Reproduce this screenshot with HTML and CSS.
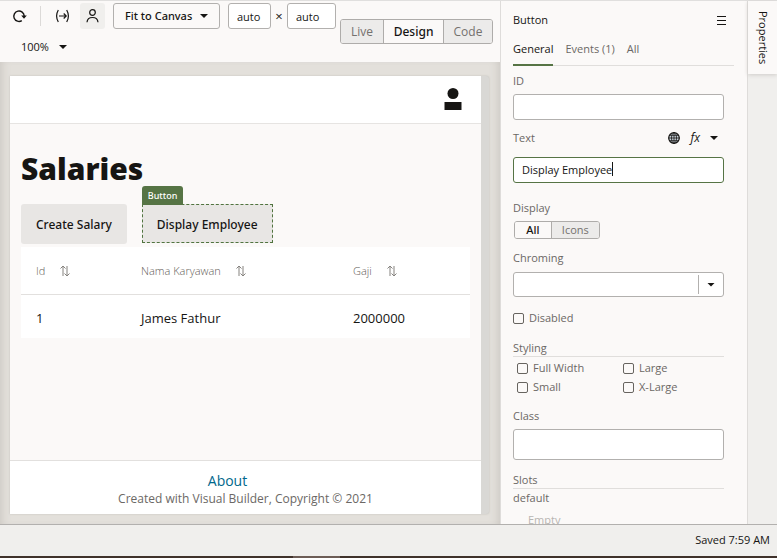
FILE: index.html
```html
<!DOCTYPE html>
<html lang="en">
<head>
<meta charset="utf-8">
<title>Visual Builder</title>
<link rel="stylesheet" href="styles.css">
</head>
<body>
<div class="workspace">
  <main class="editor">
    <div class="toolbar">
      <div class="tools">
        <button class="tool" aria-label="Reload"><svg width="16" height="16" viewBox="0 0 16 16"><path d="M9.800 12.600A5.200 5.200 0 1 1 12.200 8" fill="none" stroke="currentColor" stroke-width="1.4"/><path d="M9.200 7.500h5.600L12 10.800z" fill="currentColor"/></svg></button>
        <span class="divider"></span>
        <button class="tool" aria-label="Fit width"><svg width="16" height="16" viewBox="0 0 16 16" fill="none" stroke="currentColor" stroke-width="1.2"><path d="M3.300 2Q-.1 8 3.300 14M11.700 2Q15.100 8 11.700 14M4 8h7M8.700 5.500 11.200 8 8.700 10.500"/></svg></button>
        <button class="tool active" aria-label="User"><svg width="16" height="16" viewBox="0 0 16 16" fill="none" stroke="currentColor" stroke-width="1.2"><circle cx="7.500" cy="4.500" r="2.800"/><path d="M2 14.300C2.500 7.900 12.500 7.900 13 14.300"/></svg></button>
        <span class="picker"><select class="fit" aria-label="Canvas size"><option>Fit to Canvas</option></select><span class="arrow"></span></span>
        <input class="dimension" aria-label="Width" value="auto">
        <span class="times">×</span>
        <input class="dimension tall" aria-label="Height" value="auto">
      </div>
      <span class="picker zoom"><select aria-label="Zoom"><option>100%</option></select><span class="arrow"></span></span>
      <div class="segments modes"><button>Live</button><button class="selected">Design</button><button>Code</button></div>
    </div>
    <div class="canvas">
      <div class="device">
        <header class="page-head"><svg width="18" height="22" viewBox="0 0 18 22"><circle cx="9" cy="5.5" r="5.5" fill="#161513"/><path d="M.5 14h17v8H.5z" fill="#161513"/></svg></header>
        <section class="page-body">
          <h1>Salaries</h1>
          <div class="actions">
            <button>Create Salary</button>
            <button class="picked">Display Employee<span class="tag">Button</span></button>
          </div>
          <table>
            <colgroup><col class="col-id"><col class="col-name"><col></colgroup>
            <thead><tr>
              <th>Id<svg class="sort" width="10" height="12" viewBox="0 0 10 12"><path d="M3 11V1M.5 3.500 3 1l2.500 2.500M7 1v10M4.500 8.500 7 11l2.500-2.500"/></svg></th>
              <th>Nama Karyawan<svg class="sort" width="10" height="12" viewBox="0 0 10 12"><path d="M3 11V1M.5 3.500 3 1l2.500 2.500M7 1v10M4.500 8.500 7 11l2.500-2.500"/></svg></th>
              <th>Gaji<svg class="sort" width="10" height="12" viewBox="0 0 10 12"><path d="M3 11V1M.5 3.500 3 1l2.500 2.500M7 1v10M4.500 8.500 7 11l2.500-2.500"/></svg></th>
            </tr></thead>
            <tbody><tr><td>1</td><td>James Fathur</td><td>2000000</td></tr></tbody>
          </table>
        </section>
        <footer class="page-foot"><a href="#about">About</a><p>Created with Visual Builder, Copyright © 2021</p></footer>
      </div>
    </div>
  </main>
  <aside class="panel">
    <div class="panel-head"><span>Button</span><button aria-label="Menu"><svg width="9" height="9" viewBox="0 0 9 9"><path d="M0 .5h9M0 4.500h9M0 8.500h9" stroke="currentColor"/></svg></button></div>
    <nav class="tabs"><a class="current" href="#general">General</a><a href="#events">Events (1)</a><a href="#all">All</a></nav>
    <form class="fields">
      <label for="id">ID</label>
      <input class="box" id="id">
      <div class="label-row">
        <label for="text">Text</label>
        <button type="button" aria-label="Translate"><svg width="12" height="12" viewBox="0 0 12 12" fill="none" stroke="currentColor"><circle cx="6" cy="6" r="5.300" fill="#c9d3dc" stroke-width="1.200"/><ellipse cx="6" cy="6" rx="2.500" ry="5.300" stroke-width=".8"/><path d="M6 .5v11M.5 6h11M1.500 3.300h9M1.500 8.700h9" stroke-width=".8"/></svg></button>
        <button type="button" class="fx">fx</button>
        <button type="button" aria-label="More"><span class="arrow"></span></button>
      </div>
      <div class="text-field"><input class="box focused" id="text" value="Display Employee"><span class="caret"></span></div>
      <span class="name display-name">Display</span>
      <div class="segments display"><button type="button" class="selected">All</button><button type="button">Icons</button></div>
      <label class="chroming-name" for="chroming">Chroming</label>
      <span class="picker chroming"><select id="chroming"><option></option></select><span class="arrow"></span></span>
      <label class="check disabled"><input type="checkbox">Disabled</label>
      <h2>Styling</h2>
      <div class="checks">
        <label class="check"><input type="checkbox">Full Width</label>
        <label class="check"><input type="checkbox">Large</label>
        <label class="check"><input type="checkbox">Small</label>
        <label class="check"><input type="checkbox">X-Large</label>
      </div>
      <label class="class-name" for="class">Class</label>
      <input class="box large" id="class">
      <h2>Slots</h2>
      <h3>default</h3>
      <p class="empty">Empty</p>
    </form>
  </aside>
  <div class="rail"><button>Properties</button></div>
</div>
<div class="status">Saved 7:59 AM</div>
<div class="taskbar"><span></span></div>
</body>
</html>
```
FILE: styles.css
```css
* { box-sizing: border-box; }
body {
  margin: 0;
  height: 100vh;
  display: flex;
  flex-direction: column;
  overflow: hidden;
  background: #f0efed;
  color: #161513;
  font: 11px/16px "Open Sans", "Noto Sans", sans-serif;
}
button, input, select { font: inherit; color: inherit; }
button { border: 0; padding: 0; background: none; }
h1, h2, h3, p { margin: 0; }
a { text-decoration: none; }

.workspace {
  flex: 1;
  min-height: 0;
  display: grid;
  grid-template-columns: minmax(0, 1fr) 248px 29px;
  border-top: 1px solid #e0dfde;
}
.editor { display: flex; flex-direction: column; min-width: 0; min-height: 0; }

.toolbar {
  display: grid;
  grid-template-columns: auto 1fr;
  column-gap: 4px;
  padding: 2px 7px 2px;
  background: #fbf9f8;
}
.tools { display: flex; align-items: center; height: 26px; }
.tool { display: grid; place-items: center; width: 25px; height: 26px; }
.tool.active { background: #f0efed; border-radius: 3px; margin: 0 8px 0 5px; }
.divider { width: 1px; height: 20px; margin: 0 9px 0 8px; background: #dcdad8; }
.picker { position: relative; display: block; }
.picker select { appearance: none; border: 0; background: none; display: block; outline: 0; }
.arrow {
  display: block;
  width: 8px;
  height: 4px;
  background: currentColor;
  clip-path: polygon(0 0, 100% 0, 50% 100%);
}
.picker .arrow { position: absolute; right: 12px; top: 50%; margin-top: -2px; pointer-events: none; }
.picker .fit {
  width: 107px;
  height: 26px;
  padding: 0 11px;
  border: 1px solid #b2b0ae;
  border-radius: 3px;
  font-family: "Noto Sans", sans-serif;
  font-weight: 500;
}
.dimension {
  width: 43px;
  height: 26px;
  margin-left: 8px;
  padding: 0 8px;
  border: 1px solid #b2b0ae;
  border-radius: 3px;
  background: #fff;
}
.dimension.tall { width: 49px; margin-left: 0; }
.times { width: 16px; text-align: center; font-size: 13px; }
.zoom { grid-row: 2; justify-self: start; width: 65px; margin: 5px 0 0 14px; }
.picker.zoom select { width: 100%; height: 26px; padding: 0; }
.picker.zoom .arrow { right: 19px; }
.segments { display: flex; border: 1px solid #aeacaa; border-radius: 3px; overflow: hidden; }
.segments button { background: #ecebea; color: #74716e; }
.segments button + button { border-left: 1px solid #aeacaa; }
.segments .selected { background: #fbf9f8; color: #161513; font-family: "Noto Sans", sans-serif; font-weight: 500; }
.modes { grid-column: 2; grid-row: 1 / 3; height: 25px; margin-top: 16px; font-size: 12px; }
.modes button { flex: 43; }
.modes .selected { flex: 60; }
.modes button:last-child { flex: 49; }

.canvas {
  flex: 1;
  min-height: 0;
  display: flex;
  padding: 14px 11px 10px 10px;
  background: #e3e0db;
  box-shadow: inset 8px 0 8px -6px #ccc8c3, inset -8px 0 8px -6px #ccc8c3;
}
.device {
  flex: 1;
  display: flex;
  flex-direction: column;
  background: #fbf9f8;
  border-right: 8px solid #d9d8d5;
  border-radius: 0 3px 3px 0;
  box-shadow: 0 0 2px #bdbab6;
}
.page-head {
  display: flex;
  justify-content: flex-end;
  height: 48px;
  padding: 12px 19px 0;
  background: #fff;
  border-bottom: 1px solid #e6e4e2;
}
.page-body { flex: 1; padding: 25px 11px 0; }
h1 { font-size: 30px; line-height: 40px; font-weight: 800; }
.actions { display: flex; align-items: flex-start; gap: 15px; margin-top: 15px; }
.actions button {
  position: relative;
  height: 40px;
  padding: 2px 15px 0;
  border-radius: 3px;
  background: #e8e6e4;
  font-family: "Noto Sans", sans-serif;
  font-size: 12px;
  font-weight: 500;
}
.actions .picked { height: 39px; padding: 2px 14px 0; border: 1px dashed #50743f; border-radius: 0; }
.tag {
  position: absolute;
  left: -1px;
  bottom: 100%;
  padding: 1px 6px;
  border-radius: 3px 3px 0 0;
  background: #567445;
  color: #fff;
  font-size: 9px;
  line-height: 17px;
  font-weight: 500;
}
table {
  width: 100%;
  margin-top: 3px;
  table-layout: fixed;
  border-collapse: collapse;
  background: #fff;
}
.col-id { width: 105px; }
.col-name { width: 212px; }
th, td { padding: 0 15px; text-align: left; }
th { height: 47px; padding-top: 2px; border-bottom: 1px solid #e2e0de; color: #5f5b57; font-size: 11px; font-weight: 300; }
td { height: 44px; padding-top: 3px; font-size: 13px; }
.sort { margin-left: 15px; vertical-align: -2px; fill: none; stroke: #85827e; }
.page-foot {
  height: 54px;
  padding-top: 11px;
  border-top: 1px solid #e2e0de;
  background: #fff;
  color: #6b6865;
  text-align: center;
  font-size: 12px;
  line-height: 18px;
}
.page-foot a { display: block; margin-right: 36px; color: #00688c; font-size: 14px; }

.panel {
  min-height: 0;
  overflow: hidden;
  padding: 11px 13px 0 12px;
  border-left: 1px solid #dedcda;
  border-right: 1px solid #dedcda;
  background: #fbf9f8;
  color: #6b6865;
}
.panel-head { display: flex; justify-content: space-between; padding-right: 8px; color: #161513; }
.panel-head button { height: 16px; display: flex; align-items: center; }
.tabs { display: flex; gap: 12px; height: 25px; margin-top: 13px; box-shadow: inset 0 -1px #e0dedc; }
.tabs a { color: #6b6865; }
.tabs .current { color: #161513; border-bottom: 2px solid #567445; }
.fields { display: flex; flex-direction: column; padding: 7px 10px 0 0; }
.box {
  width: 100%;
  height: 26px;
  margin-top: 5px;
  padding: 0 8px;
  border: 1px solid #b2b0ae;
  border-radius: 3px;
  background: #fff;
  color: #161513;
  outline: 0;
}
.box.focused { padding-bottom: 2px; border-color: #567445; }
.box.large { height: 31px; }
.label-row { display: flex; align-items: center; gap: 10px; height: 16px; margin: 10px 6px 6px 0; color: #161513; }
.label-row label { flex: 1; color: #6b6865; }
.label-row button { display: flex; align-items: center; }
.label-row .fx { font-size: 12px; font-style: italic; }
.text-field { position: relative; }
.text-field .box { display: block; }
.caret { position: absolute; left: 99px; top: 10px; width: 1px; height: 14px; background: #161513; }
.display-name { margin-top: 17px; }
.display { width: 86px; height: 18px; margin: 5px 0 0 1px; }
.display button { flex: 48; line-height: 16px; }
.display .selected { flex: 36; }
.chroming-name { margin-top: 11px; }
.chroming { margin-top: 6px; }
.picker.chroming select { width: 100%; height: 25px; border: 1px solid #b2b0ae; border-radius: 3px; background: #fff; }
.chroming::after { content: ""; position: absolute; right: 25px; top: 3px; bottom: 3px; width: 1px; background: #b2b0ae; }
.picker.chroming .arrow { right: 9px; color: #161513; }
.check { display: flex; align-items: center; gap: 5px; }
.check input {
  appearance: none;
  width: 11px;
  height: 11px;
  margin: 0;
  border: 1px solid #67645f;
  border-radius: 2px;
}
.disabled { margin: 13px 0 2px; }
h2 { margin-top: 12px; border-bottom: 1px solid #e0dedc; font-size: 11px; line-height: 16px; font-weight: 500; }
.checks { display: grid; grid-template-columns: 106px 1fr; row-gap: 3px; padding: 3px 0 0 4px; }
.class-name { margin-top: 13px; }
h3 { margin-top: 1px; font-size: 11px; font-weight: 500; }
.empty { margin: 6px 0 0 15px; color: #b8b5b2; }

.rail button {
  width: 100%;
  height: 73px;
  background: #fbf9f8;
  box-shadow: 0 1px 4px #cfccc9;
  writing-mode: vertical-rl;
}
.status {
  height: 32px;
  padding: 7px 7px 0;
  border-top: 1px solid #b2b0ae;
  text-align: right;
}
.taskbar { display: flex; justify-content: center; height: 2px; padding-right: 144px; background: #40322b; }
.taskbar span { width: 47px; background: #6d5d56; }
```
